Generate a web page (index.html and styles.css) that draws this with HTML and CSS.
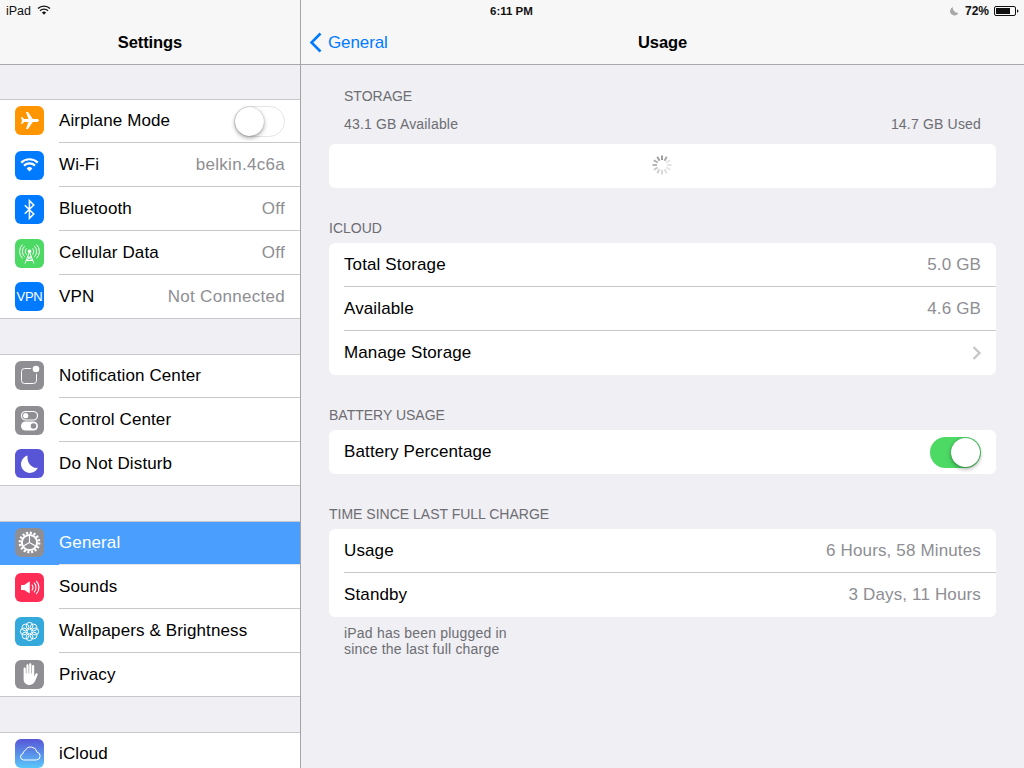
FILE: index.html
```html
<!DOCTYPE html>
<html lang="en">
<head>
<meta charset="utf-8">
<title>Settings - Usage</title>
<link rel="stylesheet" href="styles.css">
</head>
<body>
<div class="screen">
  <aside class="sidebar">
    <header class="bar">
      <div class="status status-left">
        <span>iPad</span>
        <svg class="status-wifi" viewBox="0 0 14 10"><path d="M1 3.6a8.5 8.5 0 0 1 12 0M3 5.8a5.6 5.6 0 0 1 8 0" fill="none" stroke="#111" stroke-width="1.4"/><path d="M4.9 7.6a3 3 0 0 1 4.2 0L7 9.8z" fill="#111"/></svg>
      </div>
      <div class="nav"><h1 class="title">Settings</h1></div>
    </header>
    <div class="groups">
      <section class="group">
        <div class="row">
          <svg class="icon" viewBox="0 0 29 29"><rect width="29" height="29" rx="6" fill="#ff9500"/><path d="M24 14.5c0-.9-1.2-1.4-2.4-1.4h-3.8L13 6h-2l2.4 7.1H9L7.3 11H6l1 3.5-1 3.5h1.3L9 15.9h4.4L11 23h2l4.8-7.1h3.8c1.2 0 2.4-.5 2.4-1.4z" fill="#fff"/></svg>
          <div class="row-body"><span>Airplane Mode</span><span class="switch switch-off"><span class="knob"></span></span></div>
        </div>
        <div class="row">
          <svg class="icon" viewBox="0 0 29 29"><rect width="29" height="29" rx="6" fill="#007aff"/><path d="M6.2 11.6a12 12 0 0 1 16.6 0M9 14.6a8 8 0 0 1 11 0" fill="none" stroke="#fff" stroke-width="2.2"/><path d="M11.6 17.4a4.2 4.2 0 0 1 5.8 0l-2.9 3.2z" fill="#fff"/></svg>
          <div class="row-body"><span>Wi-Fi</span><span class="value">belkin.4c6a</span></div>
        </div>
        <div class="row">
          <svg class="icon" viewBox="0 0 29 29"><rect width="29" height="29" rx="6" fill="#007aff"/><path d="M9.8 10.2l9 8.8-4.4 4.4V5.6l4.4 4.4-9 8.8" fill="none" stroke="#fff" stroke-width="1.5"/></svg>
          <div class="row-body"><span>Bluetooth</span><span class="value">Off</span></div>
        </div>
        <div class="row">
          <svg class="icon" viewBox="0 0 29 29"><rect width="29" height="29" rx="6" fill="#4cd964"/><g fill="none" stroke="#fff" stroke-width="1"><path d="M11.7 9.4a4 4 0 0 0 0 6.2M17.3 9.4a4 4 0 0 1 0 6.2M9.6 7.2a7.4 7.4 0 0 0 0 10.6M19.4 7.2a7.4 7.4 0 0 1 0 10.6M7.4 5.6a10 10 0 0 0 0 13.8M21.6 5.6a10 10 0 0 1 0 13.8"/><path d="M14.5 13L10 24.5M14.5 13l4.5 11.5M12.6 18h3.8M11.3 21.5h6.4M12.6 18l5.1 3.5M16.4 18l-5.1 3.5"/></g><circle cx="14.5" cy="12.2" r="1.8" fill="#fff"/></svg>
          <div class="row-body"><span>Cellular Data</span><span class="value">Off</span></div>
        </div>
        <div class="row">
          <span class="icon icon-vpn">VPN</span>
          <div class="row-body"><span>VPN</span><span class="value">Not Connected</span></div>
        </div>
      </section>
      <section class="group">
        <div class="row">
          <svg class="icon" viewBox="0 0 29 29"><rect width="29" height="29" rx="6" fill="#8e8e93"/><rect x="6.5" y="7.5" width="15" height="15" rx="3" fill="none" stroke="#fff" stroke-width="1"/><circle cx="21" cy="8" r="5" fill="#8e8e93"/><circle cx="21" cy="8" r="3.3" fill="#fff"/></svg>
          <div class="row-body"><span>Notification Center</span></div>
        </div>
        <div class="row">
          <svg class="icon" viewBox="0 0 29 29"><rect width="29" height="29" rx="6" fill="#8e8e93"/><rect x="6.5" y="5.5" width="16" height="8.5" rx="4.25" fill="none" stroke="#fff" stroke-width="1.2"/><circle cx="10.7" cy="9.7" r="2.6" fill="#fff"/><rect x="6" y="15.5" width="17" height="9" rx="4.5" fill="#fff"/><circle cx="18.5" cy="20" r="2.8" fill="#8e8e93"/></svg>
          <div class="row-body"><span>Control Center</span></div>
        </div>
        <div class="row">
          <svg class="icon" viewBox="0 0 29 29"><rect width="29" height="29" rx="6" fill="#5856d6"/><path d="M12.6 6.6a8.8 8.8 0 1 0 10.2 12.2c-5.8 1.2-11.4-4.8-10.2-12.2z" fill="#fff"/></svg>
          <div class="row-body"><span>Do Not Disturb</span></div>
        </div>
      </section>
      <section class="group">
        <div class="row row-selected">
          <svg class="icon" viewBox="0 0 29 29"><rect width="29" height="29" rx="6" fill="#8e8e93"/><circle cx="14.5" cy="14.5" r="9.6" fill="none" stroke="#fff" stroke-width="2.6" stroke-dasharray="2.1 1.67"/><circle cx="14.5" cy="14.5" r="7.6" fill="none" stroke="#fff" stroke-width="2"/><path d="M14.5 14.5V7.5M14.5 14.5l6 3.5M14.5 14.5l-6 3.5" stroke="#fff" stroke-width="1.1"/></svg>
          <div class="row-body"><span>General</span></div>
        </div>
        <div class="row">
          <svg class="icon" viewBox="0 0 29 29"><rect width="29" height="29" rx="6" fill="#ff2d55"/><path d="M6 12h3.2l5.6-3.8v12.4L9.2 17H6z" fill="#fff"/><path d="M16.8 11.6a4 4 0 0 1 0 5.8M19 9.6a7 7 0 0 1 0 9.8M21.2 7.8a9.6 9.6 0 0 1 0 13.4" fill="none" stroke="#fff" stroke-width="1.1"/></svg>
          <div class="row-body"><span>Sounds</span></div>
        </div>
        <div class="row">
          <svg class="icon" viewBox="0 0 29 29"><rect width="29" height="29" rx="6" fill="#34aadc"/><g fill="none" stroke="#fff" stroke-width="1"><circle cx="14.5" cy="8.8" r="3.4"/><circle cx="14.5" cy="20.2" r="3.4"/><circle cx="8.8" cy="14.5" r="3.4"/><circle cx="20.2" cy="14.5" r="3.4"/><circle cx="10.5" cy="10.5" r="3.4"/><circle cx="18.5" cy="10.5" r="3.4"/><circle cx="10.5" cy="18.5" r="3.4"/><circle cx="18.5" cy="18.5" r="3.4"/></g></svg>
          <div class="row-body"><span>Wallpapers &amp; Brightness</span></div>
        </div>
        <div class="row">
          <svg class="icon" viewBox="0 0 29 29"><rect width="29" height="29" rx="6" fill="#8e8e93"/><path d="M8.6 8.6c0-1.5 2.2-1.5 2.2 0v4.9h.6V5.4c0-1.5 2.2-1.5 2.2 0v8.1h.6V4.4c0-1.5 2.2-1.5 2.2 0v9.1h.6V6c0-1.5 2.2-1.5 2.2 0v10.4l1.2-2.4c.8-1.5 2.8-.7 2.2.9l-2.5 6.2c-.9 2.2-2.7 3.9-5.4 3.9-3.8 0-6.1-2.5-6.1-6z" fill="#fff"/></svg>
          <div class="row-body"><span>Privacy</span></div>
        </div>
      </section>
      <section class="group">
        <div class="row">
          <svg class="icon" viewBox="0 0 29 29"><defs><linearGradient id="cloud-bg" x1="0" y1="0" x2="0" y2="1"><stop offset="0" stop-color="#5856d6"/><stop offset="1" stop-color="#5ac8fa"/></linearGradient></defs><rect width="29" height="29" rx="6" fill="url(#cloud-bg)"/><path d="M8.6 21h12.6a4 4 0 0 0 .8-7.9 6.3 6.3 0 0 0-11.8-1.6A3.4 3.4 0 0 0 8 14.7 3.2 3.2 0 0 0 8.6 21z" fill="none" stroke="#fff" stroke-width="1"/></svg>
          <div class="row-body"><span>iCloud</span></div>
        </div>
      </section>
    </div>
  </aside>

  <main class="detail">
    <header class="bar">
      <div class="status status-right">
        <span class="clock">6:11 PM</span>
        <div class="status-tray">
          <svg class="status-moon" viewBox="0 0 10 10"><path d="M3.8 1A4.4 4.4 0 1 0 9.4 7C6.6 7.4 3.4 4.6 3.8 1z" fill="#a8a8a8"/></svg>
          <span class="percent">72%</span>
          <svg class="battery" viewBox="0 0 25 10"><rect x=".5" y=".5" width="21" height="9" rx="1.5" fill="none" stroke="#111"/><rect x="2" y="2" width="14" height="6" fill="#111"/><path d="M23 3.4c1 .2 1.4.8 1.4 1.6s-.4 1.4-1.4 1.6z" fill="#111"/></svg>
        </div>
      </div>
      <div class="nav">
        <div class="back">
          <svg class="back-chevron" viewBox="0 0 13 21"><path d="M11.5 1.5l-9 9 9 9" fill="none" stroke="#007aff" stroke-width="2.6"/></svg>
          <span>General</span>
        </div>
        <h1 class="title">Usage</h1>
      </div>
    </header>
    <div class="content">
      <h2 class="label-storage">STORAGE</h2>
      <div class="storage-meta"><span>43.1 GB Available</span><span>14.7 GB Used</span></div>
      <div class="card card-spinner">
        <svg class="spinner" viewBox="0 0 20 20">
          <g stroke="#77777c" stroke-width="1.9">
            <line x1="10" y1="0.5" x2="10" y2="5" opacity=".75"/>
            <line x1="14.75" y1="1.77" x2="12.5" y2="5.67" opacity=".65"/>
            <line x1="18.23" y1="5.25" x2="14.33" y2="7.5" opacity=".2"/>
            <line x1="19.5" y1="10" x2="15" y2="10" opacity=".2"/>
            <line x1="18.23" y1="14.75" x2="14.33" y2="12.5" opacity=".2"/>
            <line x1="14.75" y1="18.23" x2="12.5" y2="14.33" opacity=".25"/>
            <line x1="10" y1="19.5" x2="10" y2="15" opacity=".3"/>
            <line x1="5.25" y1="18.23" x2="7.5" y2="14.33" opacity=".35"/>
            <line x1="1.77" y1="14.75" x2="5.67" y2="12.5" opacity=".4"/>
            <line x1="0.5" y1="10" x2="5" y2="10" opacity=".55"/>
            <line x1="1.77" y1="5.25" x2="5.67" y2="7.5" opacity=".6"/>
            <line x1="5.25" y1="1.77" x2="7.5" y2="5.67" opacity=".7"/>
          </g>
        </svg>
      </div>

      <h2 class="label">ICLOUD</h2>
      <div class="card">
        <div class="item"><span>Total Storage</span><span class="value">5.0 GB</span></div>
        <div class="item"><span>Available</span><span class="value">4.6 GB</span></div>
        <div class="item"><span>Manage Storage</span><svg class="chevron" viewBox="0 0 10 14"><path d="M1.5 1l6 6-6 6" fill="none" stroke="#c7c7cc" stroke-width="2.4"/></svg></div>
      </div>

      <h2 class="label">BATTERY USAGE</h2>
      <div class="card">
        <div class="item"><span>Battery Percentage</span><span class="switch switch-on"><span class="knob"></span></span></div>
      </div>

      <h2 class="label">TIME SINCE LAST FULL CHARGE</h2>
      <div class="card">
        <div class="item"><span>Usage</span><span class="value">6 Hours, 58 Minutes</span></div>
        <div class="item"><span>Standby</span><span class="value">3 Days, 11 Hours</span></div>
      </div>
      <p class="footnote">iPad has been plugged in<br>since the last full charge</p>
    </div>
  </main>
</div>
</body>
</html>
```

FILE: styles.css
```css
* { box-sizing: border-box; }
html, body { margin: 0; padding: 0; }
body {
  width: 1024px;
  height: 768px;
  overflow: hidden;
  font-family: "Liberation Sans", Arial, sans-serif;
  color: #000;
  background: #efeff4;
}
.screen {
  display: grid;
  grid-template-columns: 301px 723px;
  height: 768px;
  overflow: hidden;
}
.sidebar {
  border-right: 1px solid #a3a3a6;
  overflow: hidden;
}
.bar {
  height: 65px;
  background: #f7f7f7;
  border-bottom: 1px solid #a9a9ac;
}
.status {
  height: 20px;
  padding-top: 1px;
  display: flex;
  align-items: center;
  font-size: 12.5px;
  color: #111;
}
.status-left { padding-left: 6px; gap: 6px; }
.status-wifi { width: 14px; height: 10px; margin-top: -2px; }
.status-right {
  justify-content: space-between;
  padding-left: 189px;
  padding-right: 5px;
}
.clock { font-weight: bold; font-size: 11.5px; }
.status-tray { display: flex; align-items: center; }
.status-moon { width: 10px; height: 10px; margin-right: 1px; }
.percent { font-weight: bold; font-size: 12px; margin: 0 5px 0 5px; }
.battery { width: 25px; height: 10px; }
.nav {
  height: 44px;
  padding-top: 1px;
  position: relative;
  display: flex;
  align-items: center;
  justify-content: center;
}
.title {
  margin: 0;
  font-size: 16.5px;
  letter-spacing: -.1px;
  font-weight: bold;
}
.back {
  position: absolute;
  left: 8px;
  top: 1px;
  height: 44px;
  display: flex;
  align-items: center;
  gap: 6px;
  color: #007aff;
  font-size: 17px;
  letter-spacing: -.1px;
}
.back-chevron { width: 13px; height: 21px; margin-top: -1px; }

.groups { padding-top: 34px; }
.group { margin-bottom: 35px; }
.row {
  display: flex;
  align-items: center;
  height: 44px;
  padding-left: 15px;
  background: #fff;
  font-size: 17px;
  letter-spacing: .12px;
}
.group .row:first-child { border-top: 1px solid #c8c7cc; }
.group .row:last-child { border-bottom: 1px solid #c8c7cc; }
.icon {
  flex: none;
  width: 29px;
  height: 29px;
  margin-right: 15px;
}
.group .row:first-child .icon { margin-bottom: 2px; }
.icon-vpn {
  display: flex;
  align-items: center;
  justify-content: center;
  border-radius: 6px;
  background: #007aff;
  color: #fff;
  font-size: 13px;
  letter-spacing: -.3px;
}
.row-body {
  flex: 1;
  height: 100%;
  display: flex;
  align-items: center;
  justify-content: space-between;
  padding-right: 15px;
  border-bottom: 1px solid #c8c7cc;
  min-width: 0;
}
.row:last-child .row-body { border-bottom: 0; }
.row-selected { background: #4a9ffe; color: #fff; }
.row-selected .row-body { border-bottom-color: #e4e4e8; }
.value { color: #8e8e93; }
.row .value { letter-spacing: .3px; }
.item .value { letter-spacing: .15px; }

.switch {
  flex: none;
  display: flex;
  width: 51px;
  height: 31px;
  padding: 1px;
  border-radius: 16px;
}
.switch-off { background: #fff; border: 1px solid #e6e6e6; padding: 0; justify-content: flex-start; }
.switch-on { background: #4cd964; justify-content: flex-end; }
.knob {
  width: 29px;
  height: 29px;
  border-radius: 50%;
  background: #fff;
  box-shadow: 0 2px 4px rgba(0, 0, 0, .35), 0 0 1px rgba(0, 0, 0, .4);
}

.content { padding: 0 28px; }
.label {
  margin: 0;
  height: 55px;
  padding-top: 32px;
  font-size: 14px;
  line-height: 16px;
  font-weight: normal;
  color: #6d6d72;
}
.label-storage {
  margin: 0;
  padding: 23px 0 0 15px;
  font-size: 14px;
  line-height: 16px;
  font-weight: normal;
  color: #6d6d72;
}
.storage-meta {
  display: flex;
  justify-content: space-between;
  padding: 12px 15px 0;
  height: 40px;
  font-size: 14px;
  letter-spacing: .18px;
  line-height: 16px;
  color: #6d6d72;
}
.card {
  background: #fff;
  border-radius: 6px;
  overflow: hidden;
}
.card-spinner {
  height: 44px;
  display: flex;
  align-items: center;
  justify-content: center;
}
.spinner { width: 20px; height: 20px; margin: 0 1px 2px 0; }
.item {
  height: 44px;
  margin-left: 15px;
  padding-right: 15px;
  display: flex;
  align-items: center;
  justify-content: space-between;
  font-size: 17px;
  letter-spacing: .12px;
  border-bottom: 1px solid #c8c7cc;
}
.item:last-child { border-bottom: 0; }
.chevron { width: 10px; height: 14px; margin-right: -1px; }
.footnote {
  margin: 0;
  padding: 8px 15px 0;
  font-size: 14px;
  letter-spacing: .2px;
  line-height: 16px;
  color: #6d6d72;
}
```
